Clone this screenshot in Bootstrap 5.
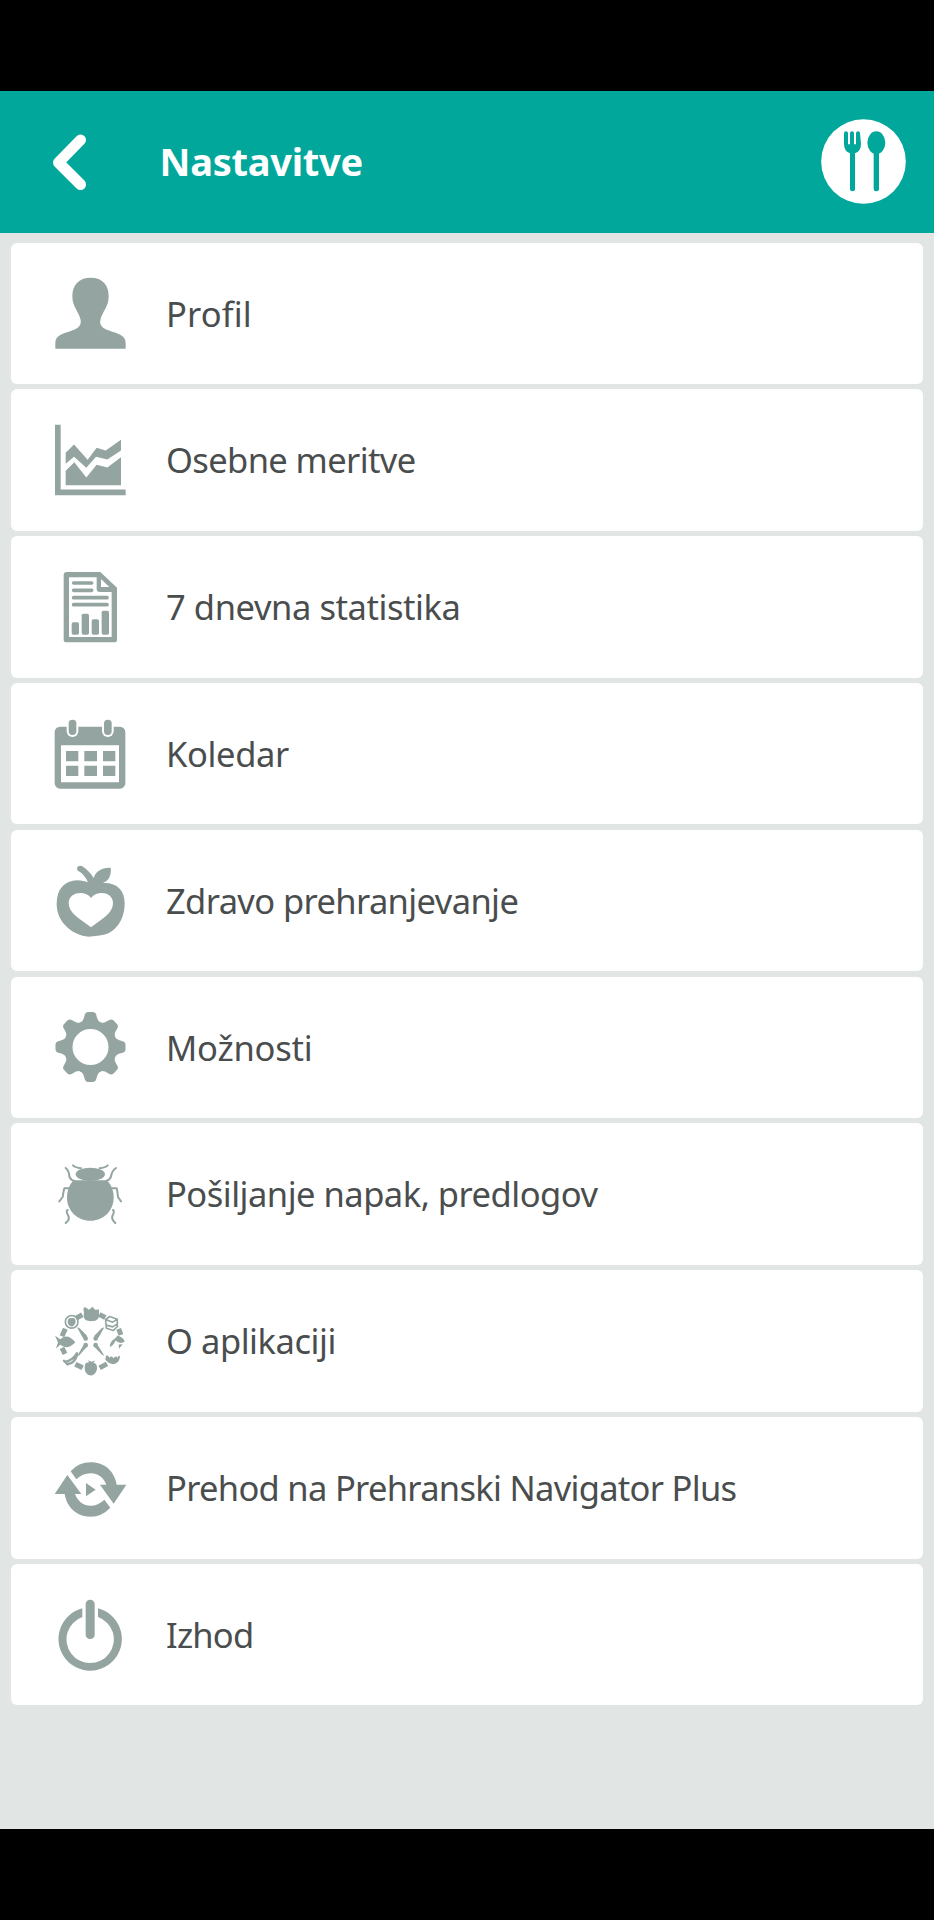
<!DOCTYPE html>
<html lang="sl">
<head>
<meta charset="utf-8">
<meta name="viewport" content="width=device-width, initial-scale=1">
<title>Nastavitve</title>
<link href="https://cdn.jsdelivr.net/npm/bootstrap@5.3.0/dist/css/bootstrap.min.css" rel="stylesheet">
<style>
body{background:#000;font-family:"Noto Sans","Open Sans",sans-serif;height:1920px;padding:91px 0;overflow-x:hidden}
.app-screen{background:#e1e5e4;height:1737.5px}
.app-bar{background:#02a79c;height:141.5px;padding:0 28px 0 50px}
.app-title{color:#fff;font-size:38px;font-weight:700;margin-left:71.5px;line-height:1;letter-spacing:-.25px;padding-bottom:2px}
.settings-list{padding:10px 10.6px;gap:5.33px}
.settings-item{height:141.5px;border:0;border-radius:6px;padding-left:29.4px;color:#4a4d4d;font-size:34.5px;line-height:1}
.settings-item svg{width:100px;height:100px;fill:#94a5a1;flex:none}
.settings-item span{margin-left:26px;white-space:nowrap;padding-top:1px}
.settings-item:nth-child(1){letter-spacing:.15px}
.settings-item:nth-child(2){letter-spacing:-.62px}
.settings-item:nth-child(3){letter-spacing:-.42px}
.settings-item:nth-child(4){letter-spacing:-.35px}
.settings-item:nth-child(5){letter-spacing:-.62px}
.settings-item:nth-child(6){letter-spacing:-.2px}
.settings-item:nth-child(7){letter-spacing:-.5px}
.settings-item:nth-child(8){letter-spacing:-.45px}
.settings-item:nth-child(9){letter-spacing:-.7px}
.settings-item:nth-child(10){letter-spacing:-.8px}
.ln{fill:none;stroke:#94a5a1;stroke-linecap:round;stroke-linejoin:round}
.wh{fill:#fff}
</style>
</head>
<body>
<main class="app-screen">
<header class="app-bar d-flex align-items-center">
<svg width="38" height="60" viewBox="0 0 38 60" fill="none" stroke="#fff" stroke-width="11" stroke-linecap="round" stroke-linejoin="round"><path d="M30.5 8L8.500 30.500L30.500 52.500"/></svg>
<h1 class="app-title mb-0"><span>Nastavitve</span></h1>
<svg class="ms-auto" width="85" height="85" viewBox="0 0 255 255"><circle cx="127.500" cy="127.500" r="127" fill="#fff"/><g fill="#02a79c"><path d="M69 43q0-6 6-6t6 6v33h6V43q0-6 6-6t6 6v33h6V43q0-6 6-6t6 6l3 32q0 22-18 28v108q0 6-7.500 6t-7.500-6V103q-18-6-18-28z"/><ellipse cx="166" cy="71" rx="27" ry="34"/><rect x="158" y="95" width="16" height="122" rx="7"/></g></svg>
</header>
<div class="settings-list d-flex flex-column">
<div class="settings-item card flex-row align-items-center"><svg viewBox="0 11 300 300"><path d="M152 55C116 55 97 78 97 110C97 144 116 154 122 182C124 197 116 207 98 213C65 225 46 228 46 252V268H257V252C257 228 238 225 205 213C187 207 178 197 181 182C188 154 206 144 206 110C206 78 188 55 152 55Z"/></svg><span>Profil</span></div>
<div class="settings-item card flex-row align-items-center"><svg viewBox="0 1.500 300 300"><path d="M45 46H62V240H257V257H45ZM77 130L102 105L143 151L170 115L197 123L243 91V123L202 150L168 142L139 175L102 142L77 163ZM77 184L103 158L139 204L170 166L202 174L243 143V227H77Z"/></svg><span>Osebne meritve</span></div>
<div class="settings-item card flex-row align-items-center"><svg viewBox="0 -8 300 300"><path fill-rule="evenodd" d="M80 37H181L231 84V240Q231 248 223 248H80Q71 248 71 240V46Q71 37 80 37ZM87 53V232H215V97H179Q170 97 170 88V53ZM183 58V82H208Z"/><path class="ln" stroke-width="11" d="M101 70H155M101 92H155M101 114H201M101 135H201"/><rect x="95" y="188" width="22" height="37" rx="5"/><rect x="125" y="162" width="22" height="63" rx="5"/><rect x="155" y="179" width="22" height="46" rx="5"/><rect x="185" y="153" width="22" height="72" rx="5"/></svg><span>7 dnevna statistika</span></div>
<div class="settings-item card flex-row align-items-center"><svg viewBox="0 -17 300 300"><rect x="44" y="51" width="212" height="186" rx="16"/><path class="wh" d="M63 107H237V218H63Z"/><rect class="wh" x="80" y="26" width="35" height="56" rx="17"/><rect class="wh" x="186" y="26" width="35" height="56" rx="17"/><rect x="86" y="30" width="23" height="46" rx="11"/><rect x="192" y="30" width="23" height="46" rx="11"/><path d="M78 124h37v31H78zM133 124h38v31h-38zM189 124h37v31h-37zM78 168h37v31H78zM133 168h38v31h-38zM189 168h37v31h-37z"/></svg><span>Koledar</span></div>
<div class="settings-item card flex-row align-items-center"><svg viewBox="0 3 300 300"><path d="M111 58C110 48 120 45 127 49C140 57 151 69 161 84C166 65 183 52 212 53C215 76 206 92 189 99C230 97 254 120 254 160C254 214 222 256 174 257C162 257 155 260 146 260C98 256 50 218 50 162C50 118 73 92 112 91C126 91 135 94 144 97C138 81 127 69 114 62Z"/><path class="wh" d="M153 144C137 120 86 124 86 159C86 189 117 204 153 232C189 204 219 189 219 159C219 124 170 120 153 144Z"/></svg><span>Zdravo prehranjevanje</span></div>
<div class="settings-item card flex-row align-items-center"><svg viewBox="0 -6 300 300"><g transform="translate(151.500 144)"><circle r="67" fill="none" stroke="#94a5a1" stroke-width="26"/><g id="teeth"><path id="tooth" d="M-36-70Q-22-74-18-94Q-16-105-7-105H7Q16-105 18-94Q22-74 36-70L20-56H-20Z"/><use href="#tooth" transform="rotate(45)"/><use href="#tooth" transform="rotate(90)"/><use href="#tooth" transform="rotate(135)"/></g><use href="#teeth" transform="rotate(180)"/></g></svg><span>Možnosti</span></div>
<div class="settings-item card flex-row align-items-center"><svg viewBox="0 -16 300 300"><ellipse cx="151" cy="75" rx="44" ry="20"/><path d="M101 93H200C214 106 221 124 221 145C221 184 190 214 151 214C112 214 81 184 81 145C81 124 88 106 101 93Z"/><path class="ln" stroke-width="6" d="M99 48Q106 55 123 57M203 48Q196 55 179 57M77 56Q88 65 88 82Q92 92 103 95M228 56Q215 65 213 82Q209 92 198 95M87 117H73Q70 128 68 143L58 156M215 117H230Q233 128 234 143L243 156M83 182Q78 184 82 194Q89 203 85 213L77 221M219 182Q223 184 220 194Q213 203 219 213L226 221"/></svg><span>Pošiljanje napak, predlogov</span></div>
<div class="settings-item card flex-row align-items-center"><svg viewBox="0 -10.500 300 300"><path class="ln" style="stroke-linecap:butt" stroke-width="15" d="M108 71L127 61M178 60L196 69M66 125L76 103M236 103L243 121M66 160L75 178M106 209L128 220M179 220L201 208"/><path d="M132 53Q127 38 136 38L147 46L158 37L165 46L177 45V66C175 77 165 80 153 80C141 80 131 76 131 64Z"/><circle class="ln" cx="95" cy="82" r="19" stroke-width="5"/><path d="M83 84Q83 68 95 71Q107 68 107 84Q101 97 95 96Q85 94 83 84Z"/><path class="ln" stroke-width="5" d="M197 75L209 66L232 74V96L220 108L199 101ZM197 75L218 83L232 74M199 92L218 97L232 88"/><path d="M45 124L61 134Q82 115 106 143Q82 168 61 151L48 162L54 143Z"/><path d="M233 123Q251 129 254 142Q239 150 227 138Q219 155 209 157Q210 140 225 132ZM236 150L248 149L237 163Z"/><path class="ln" stroke-width="7" d="M75 202Q97 199 111 176M81 209Q103 208 111 182M72 199L84 210"/><path d="M198 184Q205 180 208 190Q216 182 220 191Q229 181 232 190Q238 180 240 187Q237 208 219 209Q204 207 196 195Z"/><path d="M136 207C142 202 147 204 151 206C161 202 170 206 171 217C172 232 164 242 153 243C142 243 134 234 134 220ZM145 197L154 202L166 198L158 208L147 207Z"/><path d="M111 98L119 101L141 124L138 135L128 129ZM193 98L185 101L163 124L166 135L176 129ZM111 185L118 182L142 155L137 148L128 156ZM193 184L186 181L163 157L167 147L176 156Z"/><circle cx="137" cy="132" r="7"/><circle cx="167" cy="132" r="7"/><circle cx="137" cy="152" r="7"/><circle cx="167" cy="152" r="7"/></svg><span>O aplikaciji</span></div>
<div class="settings-item card flex-row align-items-center"><svg viewBox="0 -5 300 300"><path d="M92 95Q115 68 152 68C197 68 224 98 230 135H259L221 192L180 135H199C190 113 174 101 152 101Q127 101 109 119ZM82 106L124 163H105C114 186 130 198 152 198Q174 198 193 180L211 204Q185 231 152 231C108 231 80 201 74 163H44ZM138 130L167 150L138 170Z"/></svg><span>Prehod na Prehranski Navigator Plus</span></div>
<div class="settings-item card flex-row align-items-center"><svg viewBox="120 136 300 300"><path d="M247 206V232A71 71 0 1 0 294 232V206A95 95 0 1 1 247 206Z"/><rect x="257" y="180" width="27" height="118" rx="13"/></svg><span>Izhod</span></div>
</div>
</main>
<script src="https://cdn.jsdelivr.net/npm/bootstrap@5.3.0/dist/js/bootstrap.bundle.min.js"></script>
</body>
</html>
